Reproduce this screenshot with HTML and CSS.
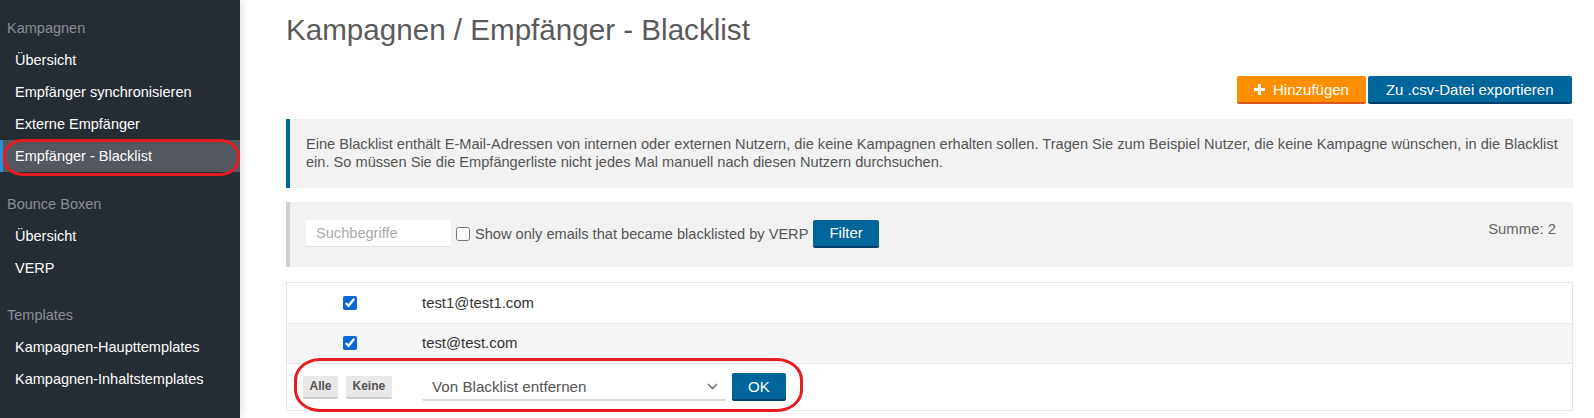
FILE: index.html
```html
<!DOCTYPE html>
<html lang="de">
<head>
<meta charset="utf-8">
<title>Kampagnen / Empfänger - Blacklist</title>
<link rel="stylesheet" href="styles.css">
</head>
<body>
<div class="app">
  <aside class="sidebar">
    <nav class="nav-section">
      <div class="nav-head">Kampagnen</div>
      <a class="nav-item">Übersicht</a>
      <a class="nav-item">Empfänger synchronisieren</a>
      <a class="nav-item">Externe Empfänger</a>
      <a class="nav-item active">Empfänger - Blacklist</a>
    </nav>
    <nav class="nav-section">
      <div class="nav-head">Bounce Boxen</div>
      <a class="nav-item">Übersicht</a>
      <a class="nav-item">VERP</a>
    </nav>
    <nav class="nav-section">
      <div class="nav-head">Templates</div>
      <a class="nav-item">Kampagnen-Haupttemplates</a>
      <a class="nav-item">Kampagnen-Inhaltstemplates</a>
    </nav>
  </aside>

  <main class="main">
    <h1 class="title">Kampagnen / Empfänger - Blacklist</h1>

    <div class="toolbar">
      <button class="btn btn-orange"><svg class="plus" width="11" height="11" viewBox="0 0 11 11"><path d="M4 0h3v4h4v3H7v4H4V7H0V4h4z" fill="#fff"/></svg>Hinzufügen</button>
      <button class="btn btn-blue btn-export">Zu .csv-Datei exportieren</button>
    </div>

    <div class="info">Eine Blacklist enthält E-Mail-Adressen von internen oder externen Nutzern, die keine Kampagnen erhalten sollen. Tragen Sie zum Beispiel Nutzer, die keine Kampagne wünschen, in die Blacklist ein. So müssen Sie die Empfängerliste nicht jedes Mal manuell nach diesen Nutzern durchsuchen.</div>

    <div class="filter">
      <input class="search" type="text" placeholder="Suchbegriffe">
      <label class="verp"><input type="checkbox" class="cb-plain">Show only emails that became blacklisted by VERP</label>
      <button class="btn btn-blue btn-filter">Filter</button>
      <div class="sum">Summe: 2</div>
    </div>

    <div class="table">
      <div class="row">
        <div class="cell cell-check"><input type="checkbox" class="cb" checked></div>
        <div class="cell cell-mail">test1@test1.com</div>
      </div>
      <div class="row row-alt">
        <div class="cell cell-check"><input type="checkbox" class="cb" checked></div>
        <div class="cell cell-mail">test@test.com</div>
      </div>
      <div class="row row-actions">
        <div class="cell cell-sel">
          <button class="btn-small">Alle</button>
          <button class="btn-small">Keine</button>
        </div>
        <div class="cell cell-act">
          <div class="select"><span>Von Blacklist entfernen</span><svg width="11" height="7" viewBox="0 0 11 7"><path d="M1 1l4.5 4.5L10 1" fill="none" stroke="#666" stroke-width="1.4"/></svg></div>
          <button class="btn btn-blue btn-ok">OK</button>
        </div>
      </div>
    </div>
  </main>

  <div class="ring ring-nav"></div>
  <div class="ring ring-actions"></div>
</div>
</body>
</html>
```
FILE: styles.css
```css
* { box-sizing: border-box; }
html, body { margin: 0; padding: 0; }
body {
  font-family: "Liberation Sans", Arial, sans-serif;
  font-size: 14.6px;
  color: #555;
  background: #fff;
}
.app {
  position: relative;
  display: flex;
  min-height: 418px;
}

/* Sidebar */
.sidebar {
  width: 240px;
  flex: 0 0 240px;
  background: #262c34;
  padding-top: 12px;
  box-shadow: 2px 0 8px rgba(0,0,0,0.12);
  position: relative;
  z-index: 1;
}
.nav-section { display: flex; flex-direction: column; margin-bottom: 15.5px; }
.nav-head {
  height: 32px;
  line-height: 32px;
  padding-left: 7px;
  color: #8a8e95;
  font-size: 14.5px;
}
.nav-item {
  display: block;
  height: 32px;
  line-height: 32px;
  padding-left: 15px;
  color: #fff;
  font-size: 14.5px;
  text-decoration: none;
}
.nav-item.active {
  background: #53575f;
  border-left: 3px solid #2c8fd3;
  padding-left: 12px;
}

/* Main */
.main {
  flex: 1;
  min-width: 0;
  padding: 13px 21px 0 46px;
}
.title {
  margin: 0;
  font-size: 29.6px;
  line-height: 34px;
  font-weight: normal;
  color: #5a5a5a;
}
.toolbar {
  display: flex;
  justify-content: flex-end;
  gap: 2px;
  margin-top: 29px;
  padding-right: 1.5px;
}
.btn {
  font-family: "Liberation Sans", Arial, sans-serif;
  font-size: 15px;
  color: #fff;
  height: 28px;
  padding: 0 17px;
  border: 0;
  border-radius: 2px;
  display: inline-flex;
  align-items: center;
  cursor: pointer;
}
.btn-orange { background: #ff8f00; border-bottom: 2px solid #e0561c; }
.btn-blue { background: #00659b; border-bottom: 2px solid #003f6b; }
.btn-export { padding: 0 18px; }
.plus { margin-right: 8px; }

.info {
  margin-top: 15px;
  background: #f2f2f2;
  border-left: 4px solid #00659b;
  padding: 17px 15px 17px 16px;
  line-height: 17.6px;
  color: #555;
}

.filter {
  margin-top: 14px;
  background: #f2f2f2;
  border-left: 4px solid #cfcfcf;
  padding: 17.5px 17px 19px 16px;
  display: flex;
  align-items: center;
}
.search {
  width: 145px;
  height: 27.4px;
  border: 0;
  border-bottom: 1px solid #e2e2e2;
  border-radius: 2px;
  background: #fff;
  padding: 0 10px;
  font-family: "Liberation Sans", Arial, sans-serif;
  font-size: 14.6px;
  color: #555;
}
.search::placeholder { color: #aaa; }
.verp {
  display: flex;
  align-items: center;
  color: #555;
  margin-left: 5px;
}
.cb-plain {
  width: 14px;
  height: 14px;
  margin: 0 5px 0 0;
}
.btn-filter { margin-left: 5px; padding: 0 16px; }
.sum {
  margin-left: auto;
  align-self: flex-start;
  line-height: 18px;
  color: #666;
  font-size: 14.9px;
}

.table {
  margin-top: 15.6px;
  border: 1px solid #e6e6e6;
}
.row {
  display: grid;
  grid-template-columns: 126px 1fr;
  min-height: 40.4px;
  border-bottom: 1px solid #e6e6e6;
}
.row:last-child { border-bottom: 0; }
.row-alt { background: #f5f5f5; }
.cell { display: flex; align-items: center; }
.cell-check { justify-content: center; }
.cb {
  width: 14px;
  height: 14px;
  margin: 0;
  accent-color: #0a66d4;
}
.cell-mail {
  padding-left: 9px;
  font-size: 14.9px;
  color: #333;
}
.row-actions { min-height: 46.4px; }
.cell-sel { padding-left: 16px; gap: 8px; }
.btn-small {
  font-family: "Liberation Sans", Arial, sans-serif;
  font-size: 12px;
  font-weight: bold;
  color: #555;
  background: #e8e8e8;
  border: 0;
  border-bottom: 2px solid #cfcfcf;
  border-radius: 2px;
  height: 22.5px;
  padding: 0 6.5px;
}
.cell-act { padding-left: 9px; gap: 6px; }
.select {
  width: 304px;
  height: 26.5px;
  background: #fff;
  border-bottom: 2px solid #dcdcdc;
  border-radius: 2px;
  display: flex;
  align-items: center;
  justify-content: space-between;
  padding: 0 8px 0 10px;
  font-size: 15.2px;
  color: #555;
}
.btn-ok { padding: 0 16px; }

/* annotation rings */
.ring {
  position: absolute;
  border: 3.5px solid #e51c24;
  pointer-events: none;
  z-index: 5;
}
.ring-nav {
  left: 3px;
  top: 139px;
  width: 237px;
  height: 37px;
  border-radius: 20px / 17px;
}
.ring-actions {
  left: 294px;
  top: 358px;
  width: 509px;
  height: 54px;
  border-radius: 26px / 22px;
}
```
